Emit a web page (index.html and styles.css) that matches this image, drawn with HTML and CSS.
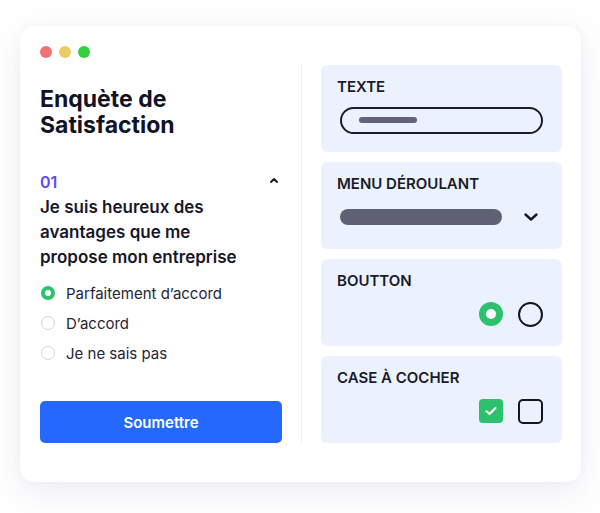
FILE: index.html
```html
<!DOCTYPE html>
<html lang="fr">
<head>
<meta charset="utf-8">
<title>Enquète de Satisfaction</title>
<link rel="stylesheet" href="styles.css">
</head>
<body>
<div class="card">
  <div class="dots">
    <span class="dot red"></span>
    <span class="dot yellow"></span>
    <span class="dot green"></span>
  </div>
  <div class="content">
    <div class="survey">
      <h1 class="title">Enquète de<br>Satisfaction</h1>
      <div class="q-head">
        <span class="q-num">01</span>
        <svg class="caret" width="10" height="7" viewBox="0 0 10 7"><path d="M2 5 L5 2 L8 5" fill="none" stroke="#1b1b2b" stroke-width="2" stroke-linecap="round" stroke-linejoin="round"/></svg>
      </div>
      <p class="question">Je suis heureux des avantages que me propose mon entreprise</p>
      <ul class="options">
        <li class="option"><span class="radio on"></span>Parfaitement d’accord</li>
        <li class="option"><span class="radio"></span>D’accord</li>
        <li class="option"><span class="radio"></span>Je ne sais pas</li>
      </ul>
      <button class="submit">Soumettre</button>
    </div>
    <div class="divider"></div>
    <div class="widgets">
      <div class="panel">
        <div class="label">TEXTE</div>
        <div class="controls">
          <div class="input"><span class="input-bar"></span></div>
        </div>
      </div>
      <div class="panel">
        <div class="label">MENU DÉROULANT</div>
        <div class="controls">
          <span class="select-bar"></span>
          <svg class="chevron" width="16" height="10" viewBox="0 0 16 10"><path d="M2.5 2.5 L8 7.5 L13.5 2.5" fill="none" stroke="#161625" stroke-width="2.4" stroke-linecap="round" stroke-linejoin="round"/></svg>
        </div>
      </div>
      <div class="panel">
        <div class="label">BOUTTON</div>
        <div class="controls end">
          <span class="big-radio on"></span>
          <span class="big-radio"></span>
        </div>
      </div>
      <div class="panel">
        <div class="label">CASE À COCHER</div>
        <div class="controls end">
          <span class="box on"><svg width="14" height="12" viewBox="0 0 14 12"><path d="M2.5 6.2 L5.6 9 L11.5 3" fill="none" stroke="#fff" stroke-width="2" stroke-linecap="round" stroke-linejoin="round"/></svg></span>
          <span class="box"></span>
        </div>
      </div>
    </div>
  </div>
</div>
</body>
</html>
```

FILE: styles.css
```css
* { box-sizing: border-box; }
html, body { margin: 0; padding: 0; background: #ffffff; }
body {
  font-family: Inter, "Noto Sans", sans-serif;
  color: #17172a;
  width: 600px;
  height: 513px;
  padding: 26px 19px 0 20px;
}
.card {
  width: 561px;
  height: 456px;
  background: #fff;
  border-radius: 14px;
  box-shadow: 0 10px 36px rgba(95, 85, 150, 0.11), 0 0 8px rgba(95, 85, 150, 0.05);
  padding: 20px 19px 39px 20px;
  display: flex;
  flex-direction: column;
}
.dots { display: flex; gap: 7px; height: 12px; }
.dot { width: 12px; height: 12px; border-radius: 50%; }
.red { background: #f07474; }
.yellow { background: #ebcb63; }
.green { background: #2fd13f; }

.content {
  flex: 1;
  margin-top: 7px;
  display: flex;
  gap: 19px;
}
.survey {
  width: 243px;
  display: flex;
  flex-direction: column;
}
.title {
  margin: 21px 0 0;
  font-size: 23px;
  line-height: 26px;
  font-weight: 700;
  color: #121226;
}
.q-head {
  margin-top: 34px;
  display: flex;
  justify-content: space-between;
  align-items: center;
  height: 20px;
}
.q-num { font-size: 16px; font-weight: 600; color: #5a4af7; line-height: 20px; }
.caret { margin-right: 3px; margin-top: -4px; }
.question {
  margin: 3px 0 0;
  max-width: 212px;
  font-size: 17px;
  line-height: 25px;
  font-weight: 600;
  color: #17172a;
}
.options { list-style: none; margin: 8px 0 0; padding: 0; }
.option {
  height: 30px;
  display: flex;
  align-items: center;
  gap: 11px;
  font-size: 15px;
  color: #262636;
}
.radio {
  width: 14px; height: 14px;
  border-radius: 50%;
  border: 1.5px solid #d3d6de;
  margin-left: 1px;
}
.radio.on { border: 4px solid #2dc06d; }
.submit {
  margin-top: auto;
  width: 242px;
  height: 42px;
  border: 0;
  border-radius: 5px;
  background: #2468fd;
  color: #fff;
  font-family: inherit;
  font-size: 15px;
  font-weight: 600;
}
.divider { width: 1px; background: #ececf1; }
.widgets {
  flex: 1;
  display: flex;
  flex-direction: column;
  gap: 10px;
}
.panel {
  height: 87px;
  background: #ebf2fd;
  border-radius: 6px;
  padding: 13px 16px 0;
}
.label {
  font-size: 15px;
  line-height: 18px;
  font-weight: 600;
  color: #1a1a2b;
}
.controls {
  margin-top: 10px;
  height: 28px;
  padding: 0 3px;
  display: flex;
  align-items: center;
  justify-content: space-between;
}
.controls.end { justify-content: flex-end; gap: 15px; }
.input {
  width: 203px;
  height: 27px;
  border: 2px solid #1b1b29;
  border-radius: 14px;
  padding-left: 17px;
  display: flex;
  align-items: center;
}
.input-bar { width: 58px; height: 6px; border-radius: 3px; background: #62637a; }
.select-bar { width: 162px; height: 16px; border-radius: 8px; background: #5f6075; }
.chevron { margin-right: 4px; }
.big-radio {
  width: 25px; height: 25px;
  border-radius: 50%;
  border: 2.5px solid #151522;
}
.big-radio.on { width: 24px; height: 24px; border: 7px solid #2dc06d; background: #fff; }
.box {
  width: 25px; height: 25px;
  border-radius: 5px;
  border: 2.5px solid #151522;
  display: flex;
  align-items: center;
  justify-content: center;
}
.box.on { width: 24px; height: 24px; border: 0; background: #2dc06d; border-radius: 4px; }
```
